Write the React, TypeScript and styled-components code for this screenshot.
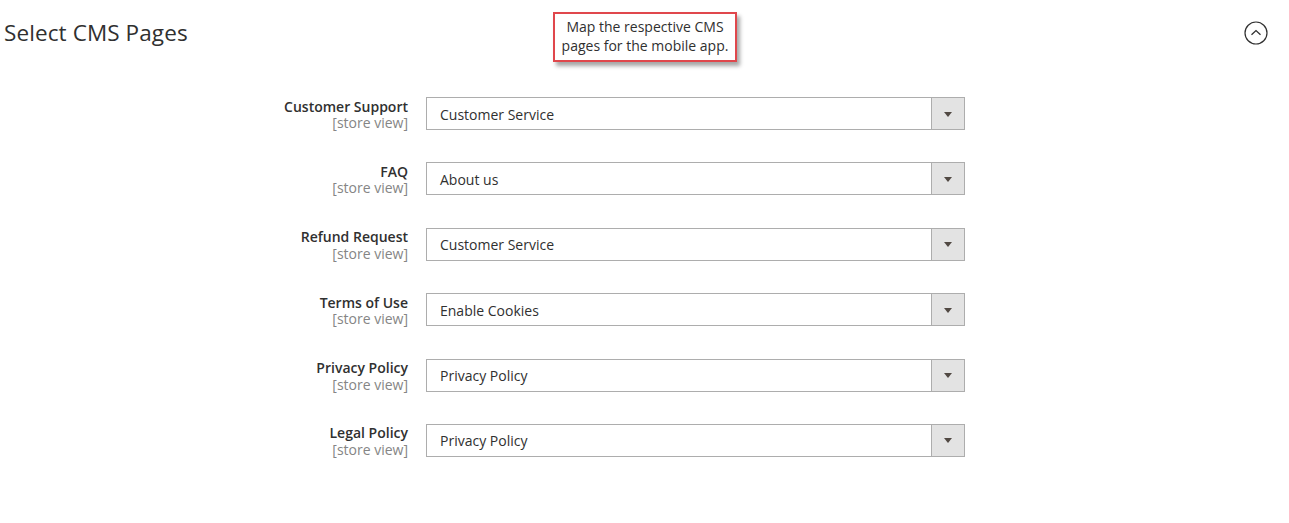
import styled, { createGlobalStyle } from 'styled-components';

const GlobalStyle = createGlobalStyle`
  body {
    margin: 0;
    background: #ffffff;
    font-family: 'Open Sans', 'Liberation Sans', sans-serif;
    color: #303030;
  }
`;

const Page = styled.div`
  position: relative;
  width: 1289px;
  height: 523px;
  overflow: hidden;
`;

const Header = styled.div`
  display: flex;
  align-items: center;
  justify-content: space-between;
  height: 64px;
  padding: 0 20px 0 4px;
`;

const Title = styled.h2`
  margin: 0;
  font-size: 22.5px;
  font-weight: 400;
  color: #303030;
  letter-spacing: 0.1px;
`;

const Callout = styled.div`
  position: absolute;
  left: 553px;
  top: 12px;
  width: 180px;
  height: 44px;
  padding-bottom: 2px;
  border: 2px solid #e0474c;
  background: #fff;
  box-shadow: 3px 4px 4px rgba(0, 0, 0, 0.35);
  font-size: 14px;
  line-height: 19px;
  color: #303030;
  text-align: center;
  display: flex;
  align-items: center;
  justify-content: center;
`;

const CollapseButton = styled.button`
  width: 26px;
  height: 26px;
  padding: 0;
  border: 0;
  background: none;
  margin-top: 2px;
  display: flex;
  align-items: center;
  justify-content: center;
`;

const Form = styled.div`
  display: flex;
  flex-direction: column;
  gap: 32.4px;
  margin-top: 33px;
`;

const Row = styled.div`
  display: grid;
  grid-template-columns: 408px 539px;
  column-gap: 18px;
  align-items: start;
  height: 33px;
`;

const Label = styled.div`
  text-align: right;
  line-height: 16.5px;
  padding-top: 1.5px;
`;

const LabelName = styled.div`
  font-size: 14px;
  font-weight: 600;
  color: #303030;
`;

const Scope = styled.div`
  font-size: 14px;
  color: #858585;
`;

const Select = styled.div`
  display: flex;
  height: 33px;
  box-sizing: border-box;
  border: 1px solid #adadad;
  background: #fff;
`;

const Value = styled.div`
  flex: 1;
  padding: 1px 13px 0;
  display: flex;
  align-items: center;
  font-size: 14px;
  color: #303030;
`;

const Arrow = styled.div`
  width: 32px;
  border-left: 1px solid #adadad;
  background: #e3e3e3;
  display: flex;
  align-items: center;
  justify-content: center;

  &::after {
    content: '';
    border-left: 4px solid transparent;
    border-right: 4px solid transparent;
    border-top: 5px solid #514943;
    margin-top: 1px;
  }
`;

const rows = [
  { label: 'Customer Support', value: 'Customer Service' },
  { label: 'FAQ', value: 'About us' },
  { label: 'Refund Request', value: 'Customer Service' },
  { label: 'Terms of Use', value: 'Enable Cookies' },
  { label: 'Privacy Policy', value: 'Privacy Policy' },
  { label: 'Legal Policy', value: 'Privacy Policy' },
];

function App() {
  return (
    <Page>
      <GlobalStyle />
      <Header>
        <Title>Select CMS Pages</Title>
        <CollapseButton aria-label="collapse">
          <svg width="24" height="24" viewBox="0 0 24 24" fill="none">
            <circle cx="12" cy="12" r="11" stroke="#303030" strokeWidth="1.2" />
            <path d="M7.5 13.8 L12 9.6 L16.5 13.8" stroke="#303030" strokeWidth="1.3" />
          </svg>
        </CollapseButton>
      </Header>
      <Callout>
        Map the respective CMS
        <br />
        pages for the mobile app.
      </Callout>
      <Form>
        {rows.map((r) => (
          <Row key={r.label}>
            <Label>
              <LabelName>{r.label}</LabelName>
              <Scope>[store view]</Scope>
            </Label>
            <Select>
              <Value>{r.value}</Value>
              <Arrow />
            </Select>
          </Row>
        ))}
      </Form>
    </Page>
  );
}

export default App;
